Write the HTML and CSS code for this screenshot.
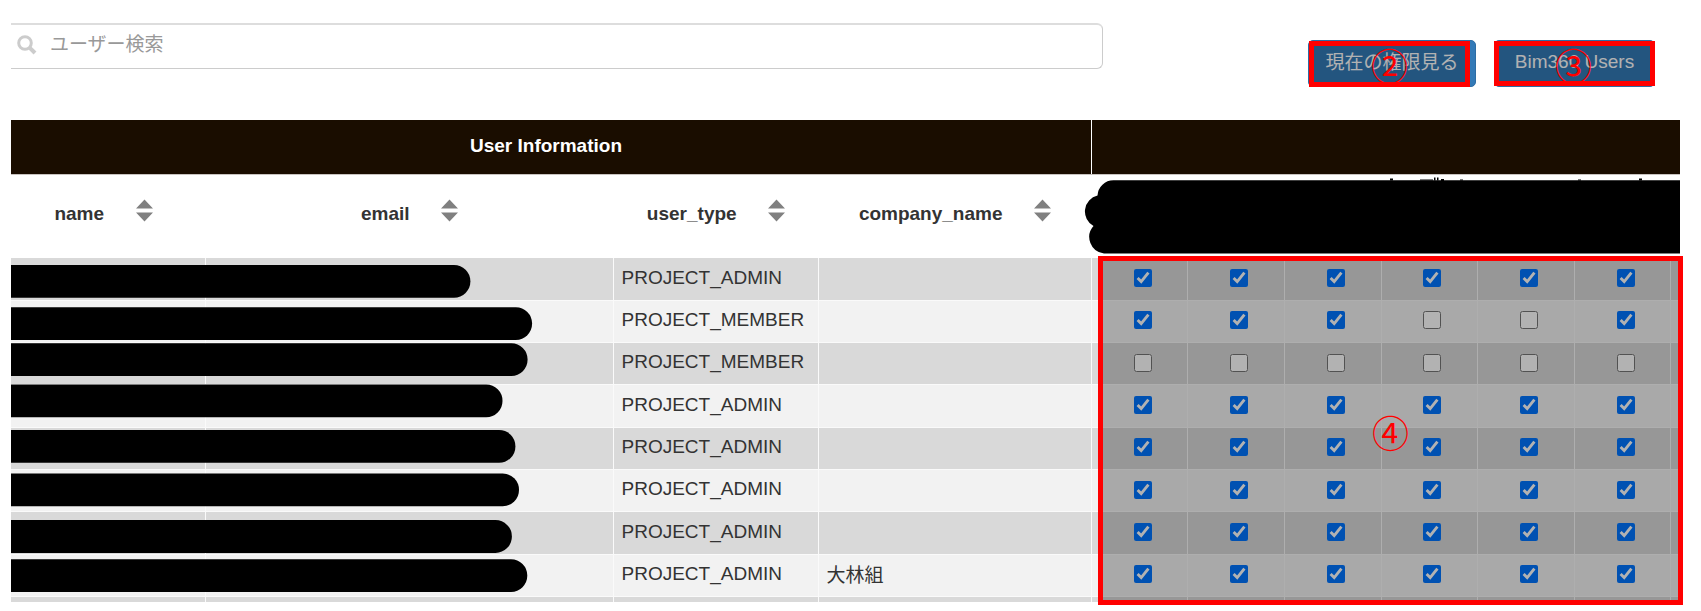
FILE: index.html
```
<!DOCTYPE html>
<html lang="ja">
<head>
<meta charset="utf-8">
<title>User Information</title>
<link rel="stylesheet" href="styles.css">
</head>
<body>
<main class="page">
  <div class="toolbar">
    <div class="search">
      <svg class="search-icon" viewBox="0 0 20 20"><circle cx="8" cy="8" r="6.3"/><path d="M12.8 12.8L18 18"/></svg>
      <span>ユーザー検索</span>
    </div>
    <div class="buttons">
      <div class="button view"><span>現在の権限見る</span></div>
      <div class="button users"><span>Bim360 Users</span></div>
    </div>
  </div>
  <div class="table">
    <div class="group-head"><div class="group-title">User Information</div><div></div></div>
    <div class="col-head" id="heads"></div>
    <div id="rows"></div>
  </div>
  <svg class="redactions" width="1701" height="611" viewBox="0 0 1701 611">
    <path d="M11 264.9H454a16.4 16.4 0 0 1 0 32.8H11z"/>
    <path d="M11 307.3H515.8a16.3 16.3 0 0 1 0 32.6H11z"/>
    <path d="M11 343.3H511.3a16.3 16.3 0 0 1 0 32.6H11z"/>
    <path d="M11 384.6H486.2a16.3 16.3 0 0 1 0 32.6H11z"/>
    <path d="M11 430.1H499.1a16.3 16.3 0 0 1 0 32.6H11z"/>
    <path d="M11 473.6H502.7a16.3 16.3 0 0 1 0 32.6H11z"/>
    <path d="M11 520.1H495.5a16.4 16.4 0 0 1 0 32.8H11z"/>
    <path d="M11 559.3H511a16.3 16.3 0 0 1 0 32.6H11z"/>
    <path d="M1680 180.3H1113.5A16 16 0 0 0 1097.5 195.5A16.5 16.5 0 0 0 1093.5 226A16.5 16.5 0 0 0 1104 253.4H1680z"/>
    <path d="M1390 178.5h3v2h-3zM1420 179.5h13v1h-13zM1434 177.5h1.5v3h-1.5zM1437 177.5h1.5v3h-1.5zM1441 179h3v2h-3zM1460 179.5h3v1h-3zM1578 179.5h3v1h-3zM1639 178.5h3v2h-3z"/>
  </svg>
  <div class="callout two"><span>②</span></div>
  <div class="callout three"><span>③</span></div>
  <div class="callout four"><span>④</span></div>
</main>
<script src="app.js"></script>
</body>
</html>
```
FILE: styles.css
```
* { box-sizing: border-box; }
body { margin: 0; background: #fff; color: #333; font-family: "Liberation Sans", "Noto Sans CJK JP", sans-serif; font-size: 19px; }
.page { position: relative; width: 1701px; height: 611px; overflow: hidden; padding: 23px 21px 0 11px; }
.toolbar { display: flex; height: 97px; }
.search { display: flex; align-items: center; width: 1092px; height: 46px; padding: 0 0 5px 6px; gap: 14px; border: 1px solid #ccc; border-top: 2px solid #ddd; border-left: 0; border-radius: 0 6px 6px 0; color: #999; font-weight: 400; }
.search span { padding-bottom: 3px; margin-left: -1px; }
.search-icon { width: 20px; height: 20px; margin-top: 1px; fill: none; stroke: #ccc; stroke-width: 3; }
.search-icon path { stroke-width: 4; }
.buttons { display: flex; gap: 19px; margin-left: 205px; padding-top: 17px; }
.button { display: flex; justify-content: center; align-items: center; height: 47px; background: #337ab7; border: 1px solid #2e6da4; border-radius: 5px; color: #fff; padding-bottom: 4px; }
.button.view { width: 168px; padding-bottom: 6px; }
.button.users { width: 161px; margin-left: -1px; }
.table { height: 482px; overflow: hidden; }
.group-head { display: grid; grid-template-columns: 1081px 1fr; height: 55px; border-bottom: 1px solid #c8c3c0; background: #1a0d00; }
.group-title { display: flex; align-items: center; justify-content: center; padding: 0 10px 3px 0; border-right: 1px solid #fff; color: #fff; font-weight: bold; }
.col-head, .row { display: grid; grid-template-columns: 195px 408px 205px 272.9px repeat(6, 96.6px) 1fr; }
.col-head { height: 83.4px; font-weight: bold; }
.head { display: flex; justify-content: center; align-items: center; gap: 31.5px; padding: 0 14px 8px 13px; }
.head:first-child { padding: 0 10px 8px 0; }
.head span { padding-top: 3px; }
.sort { width: 17px; height: 23px; fill: #808080; margin-top: -4px; }
.head.empty { visibility: hidden; }
.row { height: 42.33px; background: #f2f2f2; }
.row:nth-child(odd) { background: #d9d9d9; }
.cell { display: flex; align-items: center; padding: 0 0 3px 7.5px; border-right: 1.6px solid #fafafa; border-bottom: 1.3px solid #fafafa; }
.cell.check { justify-content: center; padding: 0 0 2px 6px; }
.cell.check input { width: 18px; height: 18px; margin: 0; }
.redactions { position: absolute; left: 0; top: 0; fill: #000; }
.callout { position: absolute; display: flex; align-items: center; justify-content: center; border: 5px solid #f00; background: rgba(0, 0, 0, .3); color: #f00; font: 400 37px/1 "Noto Sans CJK JP", sans-serif; }
.callout span { padding-top: 3px; }
.two { left: 1309px; top: 41px; width: 161px; height: 46px; }
.three { left: 1494px; top: 41px; width: 161px; height: 45px; }
.three span { margin-left: -2px; }
.four { left: 1098px; top: 256px; width: 585px; height: 349px; }
```
FILE: app.js
```
const heads = ['name', 'email', 'user_type', 'company_name', '', '', '', '', '', '', ''];
document.getElementById('heads').innerHTML = heads.map(h => h
  ? `<div class="head"><span>${h}</span><svg class="sort" viewBox="0 0 17 23"><path d="M0 9.5L8.5 0.5L17 9.5zM0 13.5H17L8.5 22.5z"/></svg></div>`
  : '<div class="head empty"></div>').join('');

const rows = [
  ['PROJECT_ADMIN', '', '111111'],
  ['PROJECT_MEMBER', '', '111001'],
  ['PROJECT_MEMBER', '', '000000'],
  ['PROJECT_ADMIN', '', '111111'],
  ['PROJECT_ADMIN', '', '111111'],
  ['PROJECT_ADMIN', '', '111111'],
  ['PROJECT_ADMIN', '', '111111'],
  ['PROJECT_ADMIN', '大林組', '111111'],
  ['', '', '']
];
document.getElementById('rows').innerHTML = rows.map(([type, company, checks]) => {
  const boxes = [0, 1, 2, 3, 4, 5].map(i => `<div class="cell check">${
    checks ? `<input type="checkbox"${checks[i] === '1' ? ' checked' : ''}>` : ''}</div>`).join('');
  return `<div class="row"><div class="cell"></div><div class="cell"></div><div class="cell">${type}</div><div class="cell">${company}</div>${boxes}<div class="cell"></div></div>`;
}).join('');
```
